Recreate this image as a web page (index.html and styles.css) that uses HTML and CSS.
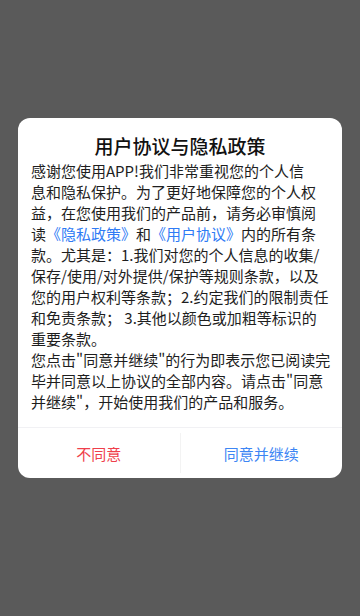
FILE: index.html
```html
<!DOCTYPE html>
<html lang="zh-CN">
<head>
<meta charset="utf-8">
<meta name="viewport" content="width=device-width, initial-scale=1">
<title>用户协议与隐私政策</title>
<link rel="stylesheet" href="styles.css">
</head>
<body>
<div class="overlay">
  <div class="dialog">
    <h1 class="title">用户协议与隐私政策</h1>
    <div class="content">
      <p>感谢您使用APP!我们非常重视您的个人信<br>息和隐私保护。为了更好地保障您的个人权<br>益，在您使用我们的产品前，请务必审慎阅<br>读<a class="link">《隐私政策》</a>和<a class="link">《用户协议》</a>内的所有条<br>款。尤其是：1.我们对您的个人信息的收集/<br>保存/使用/对外提供/保护等规则条款，以及<br>您的用户权利等条款；2.约定我们的限制责任<br>和免责条款； 3.其他以颜色或加粗等标识的<br>重要条款。</p>
      <p>您点击"同意并继续"的行为即表示您已阅读完<br>毕并同意以上协议的全部内容。请点击"同意<br>并继续"，开始使用我们的产品和服务。</p>
    </div>
    <div class="actions">
      <button class="btn btn-cancel">不同意</button>
      <span class="sep"></span>
      <button class="btn btn-ok">同意并继续</button>
    </div>
  </div>
</div>
</body>
</html>
```

FILE: styles.css
```css
* { box-sizing: border-box; }
html, body {
  margin: 0;
  padding: 0;
  height: 100%;
}
body {
  background: #5a5a5a;
  font-family: "Noto Sans CJK SC", "Noto Sans", sans-serif;
  color: #222;
  text-spacing-trim: space-all;
}
.overlay {
  padding: 118px 18px 0;
}
.dialog {
  background: #fff;
  border-radius: 12px;
  width: 324px;
  overflow: hidden;
}
.title {
  margin: 0;
  padding-top: 15px;
  font-size: 19px;
  line-height: 26px;
  font-weight: 500;
  text-align: center;
  color: #111;
}
.content {
  padding: 1px 8px 15px 13px;
  font-size: 15px;
  line-height: 21px;
  color: #1e1e1e;
}
.content p {
  margin: 0;
  white-space: nowrap;
}
.link {
  color: #2f7bf5;
}
.actions {
  display: flex;
  align-items: center;
  height: 51px;
  border-top: 1px solid #f1f1f4;
}
.btn {
  flex: 1;
  height: 100%;
  border: 0;
  background: transparent;
  font-family: inherit;
  font-size: 15px;
  padding: 0;
}
.btn-cancel { color: #ef3f4c; }
.btn-ok { color: #3d86f4; }
.sep {
  width: 1px;
  height: 40px;
  background: #f3f3f3;
}
```
